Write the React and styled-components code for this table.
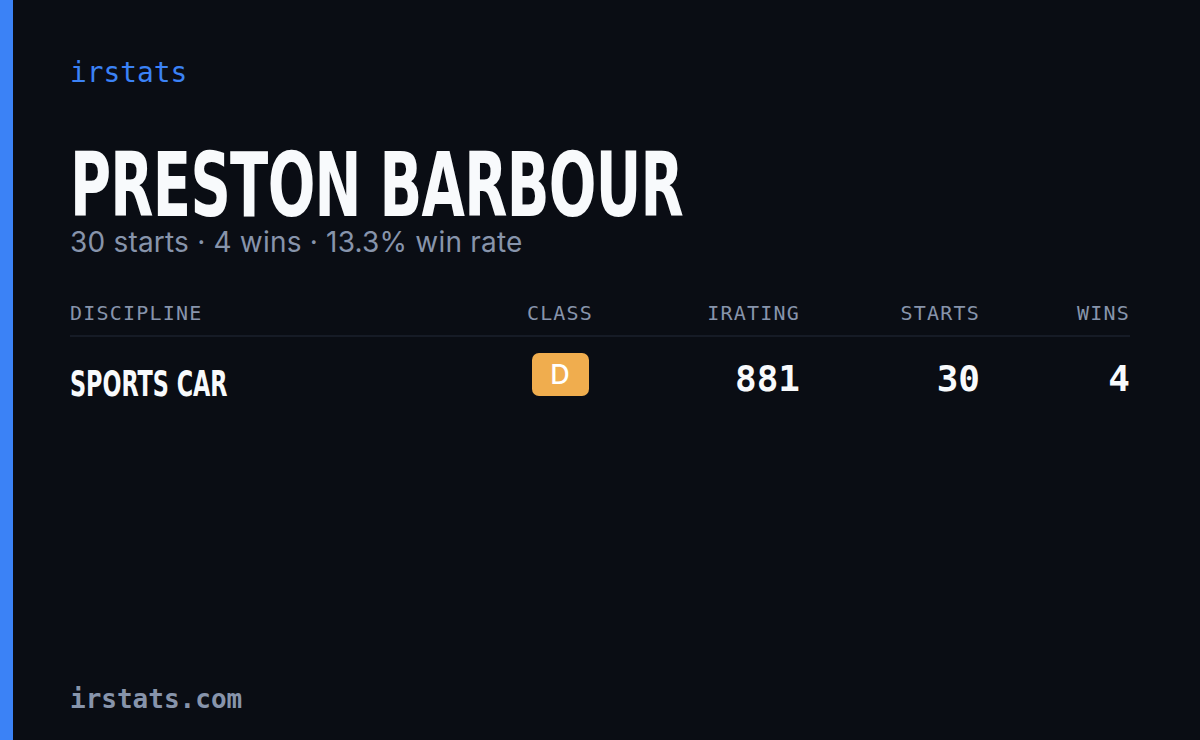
import React from "react";
import styled, { createGlobalStyle } from "styled-components";

const GlobalStyle = createGlobalStyle`
  html, body {
    margin: 0;
    padding: 0;
    background: #0a0d14;
  }
`;

const mono = `"DejaVu Sans Mono", "Liberation Mono", monospace`;
const narrow = `"Liberation Sans Narrow", "DejaVu Sans Condensed", "Liberation Sans", sans-serif`;

const Page = styled.div`
  width: 1200px;
  height: 740px;
  display: flex;
  background: #0a0d14;
  overflow: hidden;
`;

const AccentBar = styled.div`
  width: 13px;
  flex-shrink: 0;
  background: #3b82f6;
`;

const Content = styled.div`
  flex: 1;
  display: flex;
  flex-direction: column;
  padding: 55px 70px 26px 57px;
`;

const Brand = styled.div`
  font-family: ${mono};
  font-size: 27.8px;
  color: #3b82f6;
  line-height: 36px;
`;

const Name = styled.h1`
  margin: 54px 0 0;
  font-family: ${narrow};
  font-weight: 700;
  font-size: 89px;
  line-height: 80px;
  color: #f8fafc;
  letter-spacing: -1px;
  transform: scaleX(0.7);
  transform-origin: left center;
  white-space: nowrap;
`;

const Summary = styled.div`
  font-family: Inter, "Noto Sans", sans-serif;
  font-size: 28px;
  line-height: 34px;
  color: #8794ab;
  letter-spacing: 0.2px;
`;

const Table = styled.div`
  margin-top: 43px;
  display: grid;
  grid-template-columns: 430px 120px 180px 180px 150px;
`;

const HeadCell = styled.div`
  font-family: ${mono};
  font-size: 20px;
  line-height: 22px;
  color: #8794ab;
  letter-spacing: 1.2px;
  padding-bottom: 11px;
  border-bottom: 2px solid #161b26;
  text-align: ${(p) => p.align || "left"};
`;

const Cell = styled.div`
  display: flex;
  align-items: center;
  justify-content: ${(p) =>
    p.align === "center" ? "center" : p.align === "right" ? "flex-end" : "flex-start"};
  padding-top: 16px;
  height: 44px;
`;

const Discipline = styled.span`
  font-family: ${narrow};
  font-weight: 700;
  font-size: 36px;
  color: #f8fafc;
  transform: scaleX(0.69);
  transform-origin: left center;
  white-space: nowrap;
  margin-top: 16px;
`;

const Badge = styled.span`
  width: 57px;
  height: 43px;
  border-radius: 7px;
  background: #f0ad4e;
  color: #ffffff;
  font-family: Inter, "Noto Sans", sans-serif;
  font-weight: 500;
  font-size: 27px;
  display: flex;
  align-items: center;
  justify-content: center;
  margin-top: -2px;
`;

const Number = styled.span`
  font-family: ${mono};
  font-size: 36px;
  font-weight: 700;
  color: #f8fafc;
  margin-top: 7px;
`;

const Footer = styled.div`
  margin-top: auto;
  font-family: ${mono};
  font-size: 26px;
  font-weight: 700;
  color: #8794ab;
`;

const columns = [
  { label: "DISCIPLINE", align: "left" },
  { label: "CLASS", align: "center" },
  { label: "IRATING", align: "right" },
  { label: "STARTS", align: "right" },
  { label: "WINS", align: "right" },
];

const row = { discipline: "SPORTS CAR", license: "D", irating: 881, starts: 30, wins: 4 };

export default function App() {
  return (
    <Page>
      <GlobalStyle />
      <AccentBar />
      <Content>
        <Brand>irstats</Brand>
        <Name>PRESTON BARBOUR</Name>
        <Summary>30 starts · 4 wins · 13.3% win rate</Summary>
        <Table>
          {columns.map((c) => (
            <HeadCell key={c.label} align={c.align}>
              {c.label}
            </HeadCell>
          ))}
          <Cell>
            <Discipline>{row.discipline}</Discipline>
          </Cell>
          <Cell align="center">
            <Badge>{row.license}</Badge>
          </Cell>
          <Cell align="right">
            <Number>{row.irating}</Number>
          </Cell>
          <Cell align="right">
            <Number>{row.starts}</Number>
          </Cell>
          <Cell align="right">
            <Number>{row.wins}</Number>
          </Cell>
        </Table>
        <Footer>irstats.com</Footer>
      </Content>
    </Page>
  );
}
